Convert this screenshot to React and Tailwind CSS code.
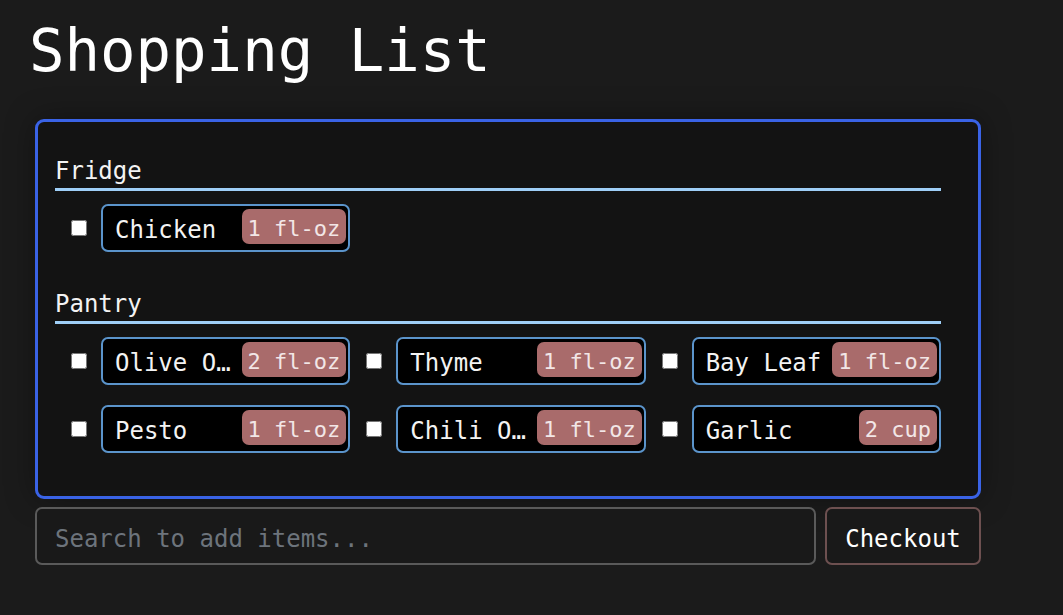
import React from 'react';

const sections = [
  {
    name: 'Fridge',
    items: [{ name: 'Chicken', qty: '1 fl-oz' }],
  },
  {
    name: 'Pantry',
    items: [
      { name: 'Olive Oil', qty: '2 fl-oz' },
      { name: 'Thyme', qty: '1 fl-oz' },
      { name: 'Bay Leaf', qty: '1 fl-oz' },
      { name: 'Pesto', qty: '1 fl-oz' },
      { name: 'Chili Oil', qty: '1 fl-oz' },
      { name: 'Garlic', qty: '2 cup' },
    ],
  },
];

const mono = { fontFamily: '"DejaVu Sans Mono", "Liberation Mono", monospace' };

const ItemCell = ({ item }) => (
  <div className="flex items-center pl-4">
    <input type="checkbox" className="m-0 w-4 h-4 shrink-0" />
    <div className="ml-[14px] flex-1 min-w-0 h-[48px] flex items-start pt-[3px] pl-3 pr-[2px] bg-black border-2 border-[#5b94cb] rounded-[7px]">
      <span className="flex-1 min-w-0 truncate text-[24px] leading-[35px] pt-[4px] text-[#f3f3f3]">
        {item.name}
      </span>
      <span className="ml-2 shrink-0 h-[35px] px-[6px] rounded-[7px] bg-[#a96b6b] text-[22px] leading-[40px] text-[#f2e6e6]">
        {item.qty}
      </span>
    </div>
  </div>
);

export default function App() {
  return (
    <div className="min-h-screen bg-[#1b1b1b] pt-[21px] pl-[35px] w-[1063px] h-[615px] overflow-hidden" style={mono}>
      <h1 className="-ml-[6px] text-[59px] leading-[60px] text-white font-normal">
        Shopping List
      </h1>

      <div className="mt-[38px] w-[946px] h-[380px] border-[3px] border-[#3a63e6] rounded-[9px] bg-[#131313] shadow-[0_0_30px_rgba(0,0,0,0.35)] pt-[35px] pl-[17px] pr-[37px] flex flex-col gap-[38px]">
        {sections.map((sec) => (
          <div key={sec.name}>
            <div className="text-[24px] leading-[28px] pb-[3px] border-b-[3px] border-[#9fcff7] text-[#f3f3f3]">
              {sec.name}
            </div>
            <div className="mt-[13px] grid grid-cols-3 gap-y-[20px]">
              {sec.items.map((item) => (
                <ItemCell key={item.name} item={item} />
              ))}
            </div>
          </div>
        ))}
      </div>

      <div className="mt-[8px] w-[946px] flex gap-[9px]">
        <input
          type="text"
          placeholder="Search to add items..."
          className="flex-1 h-[58px] px-[18px] pt-[6px] bg-[#191919] border-2 border-[#5a5a5a] rounded-[7px] text-[24px] text-white placeholder:text-[#6d747c] outline-none"
          style={mono}
        />
        <button
          className="h-[58px] w-[156px] pt-[6px] bg-[#191919] border-2 border-[#6d5050] rounded-[7px] text-[24px] text-white"
          style={mono}
        >
          Checkout
        </button>
      </div>
    </div>
  );
}
